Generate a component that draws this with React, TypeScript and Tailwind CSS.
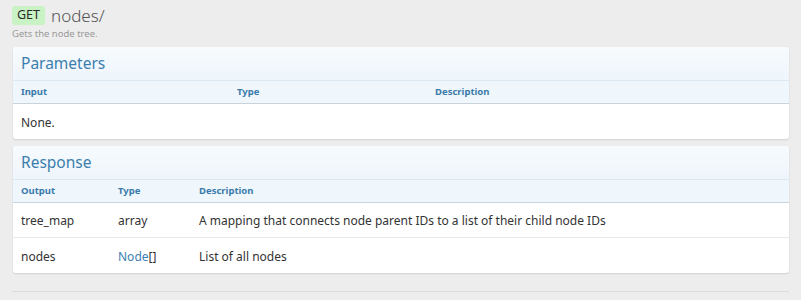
import React from "react";

type Col = { label: string; width?: string };

function Section({
  title,
  cols,
  rows,
}: {
  title: string;
  cols: Col[];
  rows: React.ReactNode[][];
}) {
  return (
    <div className="rounded-[3px] bg-white shadow-[0_1px_2px_rgba(0,0,0,0.12)] overflow-hidden">
      <div className="h-[34px] flex items-center px-[8px] bg-gradient-to-b from-[#f7fbfe] to-[#eef5fb] border-b border-[#dbe7f1]">
        <span className="text-[15.5px] text-[#3b7eae] leading-none pt-[1px]">{title}</span>
      </div>
      <div className="flex items-center h-[23px] px-[8px] bg-[#eff6fc] border-b border-[#c9d3dc]">
        {cols.map((c) => (
          <div key={c.label} className={`${c.width ?? "flex-1"} text-[9.5px] font-bold text-[#3a7bab]`}>
            {c.label}
          </div>
        ))}
      </div>
      {rows.map((r, i) => (
        <div
          key={i}
          className={`flex items-center h-[35px] px-[8px] pt-[2px] text-[12px] text-[#333] ${
            i < rows.length - 1 ? "border-b border-[#e9e9e9]" : ""
          }`}
        >
          {r.map((cell, j) => (
            <div key={j} className={cols[j]?.width ?? "flex-1"}>
              {cell}
            </div>
          ))}
        </div>
      ))}
    </div>
  );
}

export default function App() {
  return (
    <div
      className="w-[801px] h-[300px] bg-[#ededed] px-[12px] pt-[6px]"
      style={{ fontFamily: '"Noto Sans", "Open Sans", sans-serif' }}
    >
      <div className="flex items-center gap-[6px]">
        <span className="bg-[#c9f3c4] text-[#2a2a2a] text-[12.5px] rounded-[3px] w-[33px] justify-center h-[19px] flex items-center">
          GET
        </span>
        <span className="text-[17px] font-light text-[#555] leading-none">nodes/</span>
      </div>
      <div className="text-[9.5px] text-[#9a9a9a] mt-[3px] leading-[12px]">Gets the node tree.</div>
      <div className="pl-[1px] mt-[7px] flex flex-col gap-[7px]">
        <Section
          title="Parameters"
          cols={[
            { label: "Input", width: "w-[216px]" },
            { label: "Type", width: "w-[198px]" },
            { label: "Description" },
          ]}
          rows={[["None."]]}
        />
        <Section
          title="Response"
          cols={[
            { label: "Output", width: "w-[97px]" },
            { label: "Type", width: "w-[81px]" },
            { label: "Description" },
          ]}
          rows={[
            [
              "tree_map",
              "array",
              "A mapping that connects node parent IDs to a list of their child node IDs",
            ],
            [
              "nodes",
              <span>
                <span className="text-[#3b80b3]">Node</span>[]
              </span>,
              "List of all nodes",
            ],
          ]}
        />
      </div>
      <div className="mt-[18px] border-t border-[#dcdcdc]" />
    </div>
  );
}
